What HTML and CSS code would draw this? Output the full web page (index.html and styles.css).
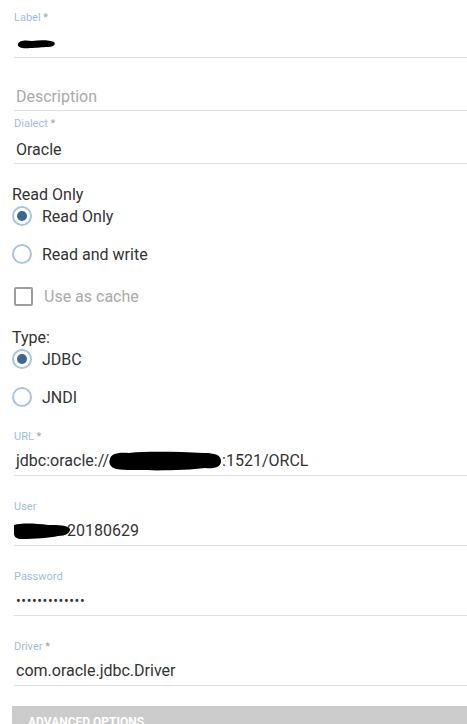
FILE: index.html
```html
<!DOCTYPE html>
<html lang="en">
<head>
  <meta charset="UTF-8">
  <meta name="viewport" content="width=device-width, initial-scale=1.0">
  <title>Datasource</title>
  <link rel="stylesheet" href="styles.css">
</head>
<body>
  <form class="ds-form">
    <!-- Text fields -->
    <div class="field">
      <label class="field-label">Label <span class="req">*</span></label>
      <div class="field-value">
        <svg class="blot" width="40" height="12" viewBox="0 0 40 12"><path d="M2 6 C3 2 10 2 16 3 C24 2 34 2 38 4 C40 6 38 9 32 9 C26 9 22 10 14 10 C8 11 1 10 2 6 Z" fill="#000"/></svg>
      </div>
    </div>
    <div class="field">
      <label class="field-label"></label>
      <div class="field-value placeholder">Description</div>
    </div>
    <div class="field">
      <label class="field-label">Dialect <span class="req">*</span></label>
      <div class="field-value">Oracle</div>
    </div>

    <!-- Read mode -->
    <div class="group group-first">
      <div class="group-title">Read Only</div>
      <div class="choice">
        <span class="radio checked"></span>
        <span>Read Only</span>
      </div>
      <div class="choice">
        <span class="radio"></span>
        <span>Read and write</span>
      </div>
      <div class="choice choice-check disabled">
        <span class="checkbox"></span>
        <span>Use as cache</span>
      </div>
    </div>

    <!-- Type -->
    <div class="group">
      <div class="group-title">Type:</div>
      <div class="choice">
        <span class="radio checked"></span>
        <span>JDBC</span>
      </div>
      <div class="choice">
        <span class="radio"></span>
        <span>JNDI</span>
      </div>
    </div>

    <!-- Connection -->
    <div class="field spaced first-spaced">
      <label class="field-label">URL <span class="req">*</span></label>
      <div class="field-value">jdbc:oracle://<svg class="blot" width="113" height="20" viewBox="0 0 113 20"><path d="M1 8 C2 3 8 1 20 2 C40 0 70 1 95 2 C106 2 112 4 112 10 C112 16 106 18 96 17 C80 19 50 20 30 19 C14 19 4 19 2 15 C0 13 0 10 1 8 Z" fill="#000"/></svg>:1521/ORCL</div>
    </div>
    <div class="field spaced">
      <label class="field-label">User</label>
      <div class="field-value"><svg class="blot blot-user" width="56" height="18" viewBox="0 0 56 18"><path d="M0 3 C6 1 20 1 34 3 C44 3 54 3 56 7 C56 11 52 14 44 14 C36 16 20 17 8 17 C3 17 0 15 0 12 Z" fill="#000"/></svg>20180629</div>
    </div>
    <div class="field spaced">
      <label class="field-label">Password</label>
      <div class="field-value dots">•••••••••••••</div>
    </div>
    <div class="field spaced">
      <label class="field-label">Driver <span class="req">*</span></label>
      <div class="field-value">com.oracle.jdbc.Driver</div>
    </div>

    <!-- Advanced -->
    <div class="advanced">ADVANCED OPTIONS</div>
  </form>
</body>
</html>
```

FILE: styles.css
```css
/* Global */
html {
  overflow: hidden;
}

body {
  margin: 0;
  font-family: Roboto, 'Liberation Sans', sans-serif;
  background-color: #ffffff;
  color: #333;
}

.ds-form {
  padding-top: 5px;
}

/* Text fields */
.field {
  padding-left: 14px;
  padding-top: 6px;
}

.field.spaced {
  margin-top: 18px;
}

.field.first-spaced {
  margin-top: 15px;
}

.field-label {
  display: block;
  height: 14px;
  line-height: 14px;
  font-size: 11px;
  color: #a2bedb;
}

.field-label .req {
  color: #9aa4ae;
}

.field-value {
  margin-top: 9px;
  padding-left: 2px;
  height: 20px;
  line-height: 20px;
  padding-bottom: 3px;
  border-bottom: 1px solid #e0e0e0;
  font-size: 16px;
  color: #333;
  display: flex;
  align-items: center;
  white-space: nowrap;
}

.field.spaced .field-value {
  margin-top: 7px;
  padding-bottom: 4px;
}

.field-value.placeholder {
  color: #aaa;
}

.field-value.dots {
  font-size: 14px;
  letter-spacing: 0.6px;
}

.blot {
  display: block;
  flex-shrink: 0;
}

.blot-user {
  margin-left: -2px;
  margin-right: -3px;
}

/* Radio / checkbox groups */
.group {
  padding-left: 12px;
  margin-top: 20px;
  display: flex;
  flex-direction: column;
}

.group-first {
  margin-top: 21px;
}

.group-title {
  font-size: 16px;
  line-height: 19px;
  height: 19px;
}

.choice {
  display: flex;
  align-items: center;
  gap: 10px;
  height: 24px;
  font-size: 16px;
}

.choice + .choice {
  margin-top: 14px;
}

.choice-check {
  padding-left: 2px;
  gap: 11px;
}

.choice + .choice-check {
  margin-top: 18px;
}

.choice.disabled {
  color: #aaa;
}

.radio {
  width: 20px;
  height: 20px;
  box-sizing: border-box;
  border: 2px solid #a9c3dd;
  border-radius: 50%;
  display: flex;
  align-items: center;
  justify-content: center;
}

.radio.checked::after {
  content: "";
  width: 10px;
  height: 10px;
  border-radius: 50%;
  background-color: #3b6791;
}

.checkbox {
  width: 19px;
  height: 19px;
  box-sizing: border-box;
  border: 2px solid #9e9e9e;
  border-radius: 2px;
}

/* Advanced options bar */
.advanced {
  margin-top: 20px;
  margin-left: 12px;
  height: 40px;
  background-color: #cccccc;
  color: #fff;
  font-size: 12px;
  font-weight: 700;
  padding: 9px 0 0 16px;
  box-sizing: border-box;
}
```
